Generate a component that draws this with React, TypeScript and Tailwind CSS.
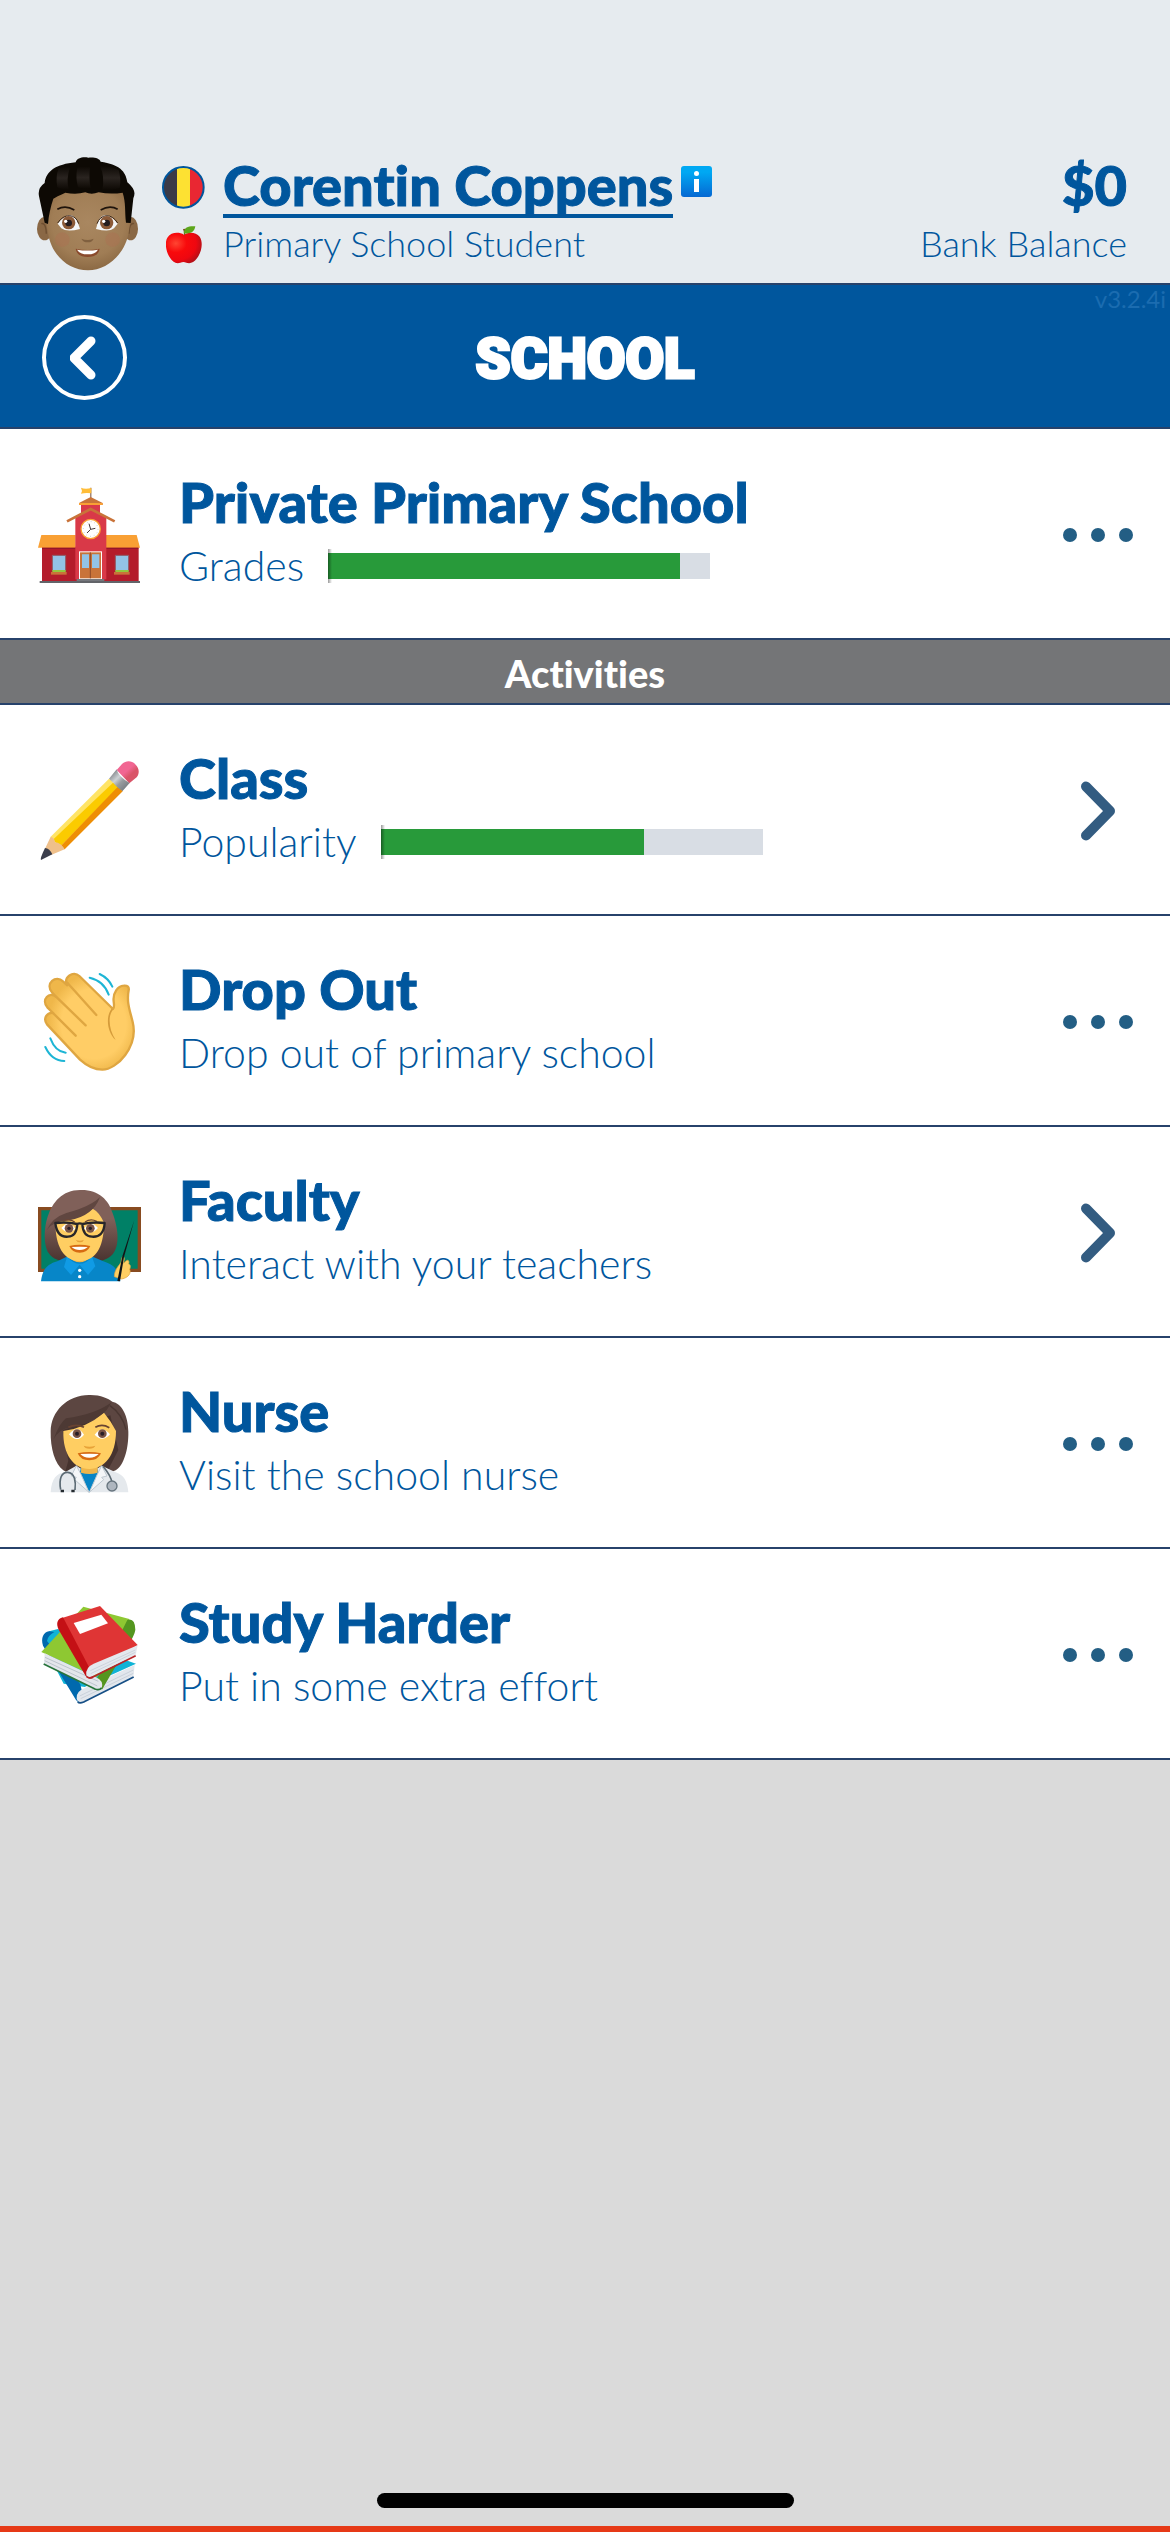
import React from "react";

interface Activity {
  title: string;
  detail: string;
  icon: React.ReactNode;
  action: "menu" | "open";
  progress?: number;
}

const AvatarIcon = () => (
  <svg viewBox="111 50 303 342" className="h-[114px] w-[101px]" aria-hidden="true">
    <defs>
      <radialGradient id="avatarSkin" cx="50%" cy="40%" r="65%">
        <stop offset="0" stopColor="#a98760" />
        <stop offset="0.65" stopColor="#a07d55" />
        <stop offset="1" stopColor="#86643f" />
      </radialGradient>
      <linearGradient id="avatarHair" x1="0" y1="0" x2="0" y2="1">
        <stop offset="0" stopColor="#0d0904" />
        <stop offset="0.5" stopColor="#2a2420" />
        <stop offset="1" stopColor="#0d0904" />
      </linearGradient>
    </defs>
    <ellipse cx="134" cy="265" rx="23" ry="35" fill="#8a6845" />
    <ellipse cx="392" cy="265" rx="22" ry="35" fill="#8a6845" />
    <path d="M124 250q14-4 15 30M402 250q-14-4-15 30" fill="none" stroke="#6e4f31" strokeWidth="4" />
    <path d="M140 150h248q10 60-1 120c-8 68-64 120-123 120s-110-46-120-112c-10-50-10-90-4-128z" fill="url(#avatarSkin)" />
    <circle cx="187" cy="298" r="22" fill="#b06c50" opacity="0.35" />
    <circle cx="338" cy="298" r="22" fill="#b06c50" opacity="0.35" />
    <path d="M117 168q-5-25 17-40c4-36 34-56 93-62 4-14 22-17 38-14 18-2 34 2 37 12 55 8 76 28 80 62 20 18 26 30 18 48l-8 74-14-1c-4-36 0-58-10-90q-36 6-72-1-22 8-40 0-28 8-60 1-28 12-36 18c-8 24-14 50-16 76l-10-4z" fill="#0d0904" />
    <path d="M176 84q20-8 34-3-12 36-4 65-20 4-34-5-6-32 4-57z" fill="url(#avatarHair)" />
    <path d="M232 82q16-6 38-2-4 36 2 64-24 4-38-3-8-30-2-59z" fill="url(#avatarHair)" />
    <path d="M300 76q32 0 56 14 8 25 3 53-24 8-52 5 8-38-7-72z" fill="url(#avatarHair)" />
    <path d="M172 207q24-14 51 2M302 209q28-16 51-2" fill="none" stroke="#1f140c" strokeWidth="5" />
    <path d="M173 250q20-26 38-26t29 42q-40 10-56-2z" fill="#f4f6f8" />
    <path d="M353 250q-20-26-38-26t-27 42q40 10 54-2z" fill="#f4f6f8" />
    <path d="M173 248q14-22 36-22 20 2 27 24M353 248q-14-22-34-22-20 2-28 24" fill="none" stroke="#3b2616" strokeWidth="3" />
    <circle cx="206" cy="247" r="20" fill="#8b5a38" />
    <circle cx="320" cy="247" r="20" fill="#8b5a38" />
    <circle cx="206" cy="248" r="10" fill="#241d20" />
    <circle cx="320" cy="248" r="10" fill="#241d20" />
    <circle cx="197" cy="243" r="5" fill="#fff" />
    <circle cx="311" cy="243" r="5" fill="#fff" />
    <path d="M244 295q18 8 37 0-4 11-18 11t-19-11z" fill="#80603f" />
    <path d="M227 325q36 8 72 0-4 25-36 25t-36-25z" fill="#8a4a2c" />
    <path d="M231 328q32 5 63 0-8 14-31 14t-32-14z" fill="#fff" />
  </svg>
);

const FlagIcon = () => (
  <svg viewBox="0 0 129 129" className="size-[43px] shrink-0" role="img" aria-label="Belgium">
    <clipPath id="flagCircle">
      <circle cx="64" cy="64" r="62" />
    </clipPath>
    <g clipPath="url(#flagCircle)">
      <path d="M0 0h45v129H0z" fill="#3b3a47" />
      <path d="M45 0h39v129H45z" fill="#fde132" />
      <path d="M84 0h45v129H84z" fill="#e92732" />
    </g>
    <circle cx="64" cy="64" r="61" fill="none" stroke="#00569d" strokeWidth="6" />
  </svg>
);

const AppleIcon = () => (
  <svg viewBox="498 254 108 114" className="h-[38px] w-[36px]" aria-hidden="true">
    <defs>
      <radialGradient id="appleSkin" cx="28%" cy="35%" r="75%">
        <stop offset="0" stopColor="#ff4532" />
        <stop offset="0.4" stopColor="#f80a0c" />
        <stop offset="0.75" stopColor="#ee0710" />
        <stop offset="1" stopColor="#b51018" />
      </radialGradient>
    </defs>
    <path d="M552 280c14-9 36-8 47 6 12 17 5 48-8 65-10 13-21 17-32 13-7-3-12-2-18 0-13 5-24-3-33-18-10-17-15-44-5-58 10-16 34-17 49-8z" fill="url(#appleSkin)" />
    <path d="M552 282q1-10-3-19l8-1q0 10-3 20z" fill="#7b4a1d" />
    <path d="M551 276c2-20 16-22 35-21-3 17-15 24-35 21z" fill="#5da61b" />
  </svg>
);

const SchoolIcon = () => (
  <svg viewBox="114 132 306 306" className="size-[102px] shrink-0" aria-hidden="true">
    <path d="M126 320h290v106H126z" fill="#b41c2b" />
    <path d="M124 285h103v38H114zM317 285h93l10 38H317z" fill="#f9a034" />
    <path d="M126 323h100v4H126zM318 323h97v4h-97z" fill="#94162a" />
    <path d="M119 423h302v6H119z" fill="#626469" />
    <path d="M271 143h3v35h-3z" fill="#764b36" />
    <path d="M243 143q12 6 31 1v16q-16-3-31 1l3-8z" fill="#ffbd38" />
    <path d="M243 195h57v25h-57z" fill="#d9394a" />
    <path d="M272 171l36 18v6h-71v-6z" fill="#c97339" />
    <path d="M237 189h71v6h-71z" fill="#f9a034" />
    <path d="M226 232l46-24 47 24v186h-93z" fill="#d93948" />
    <path d="M201 244l71-37 72 37" fill="none" stroke="#c97339" strokeWidth="8" />
    <circle cx="272" cy="267" r="29" fill="#fff" stroke="#f9a034" strokeWidth="4" />
    <circle cx="272" cy="267" r="22" fill="none" stroke="#9aa5ae" strokeWidth="3" strokeDasharray="1.5 10" />
    <path d="M267 251l5 17 14-3M272 268l-11 11" fill="none" stroke="#45393b" strokeWidth="3" />
    <path d="M237 334h69v84h-69z" fill="#fff" />
    <path d="M240 337h63v78h-63z" fill="#c97339" />
    <path d="M230 417h83v6h-83z" fill="#75777c" />
    <path d="M246 343h21v41h-21zM276 343h22v41h-22z" fill="#93c3e6" />
    <path d="M271 337v78" stroke="#8d4a29" strokeWidth="3" />
    {[177, 366].map((x) => (
      <g key={x}>
        <path d={`M${x - 20} 346h40v46h-40z`} fill="#93c3e6" stroke="#8e5b66" strokeWidth="3" />
        <path d={`M${x - 20} 390h40v8h-40z`} fill="#93c83e" />
        <path d={`M${x - 24} 396h47v8h-47z`} fill="#c97339" />
      </g>
    ))}
  </svg>
);

const PencilIcon = () => (
  <svg viewBox="114 120 306 306" className="size-[102px] shrink-0" aria-hidden="true">
    <defs>
      <linearGradient id="ferrule" x1="330" y1="165" x2="375" y2="210" gradientUnits="userSpaceOnUse">
        <stop offset="0" stopColor="#85898d" />
        <stop offset="0.35" stopColor="#cdd2d5" />
        <stop offset="0.6" stopColor="#989da1" />
        <stop offset="1" stopColor="#777c81" />
      </linearGradient>
      <linearGradient id="eraser" x1="360" y1="130" x2="405" y2="180" gradientUnits="userSpaceOnUse">
        <stop offset="0.45" stopColor="#f16692" />
        <stop offset="0.7" stopColor="#d95468" />
      </linearGradient>
    </defs>
    <path d="M350 150l16-18c14-13 32-9 41 2 10 10 13 24 3 38l-22 18z" fill="url(#eraser)" />
    <path d="M327 176l23-28q5 22 39 41l-22 25q-32-10-40-38z" fill="url(#ferrule)" />
    <path d="M152 350L327 176l13 13L160 365z" fill="#ffe466" />
    <path d="M158 360L339 188l15 16L180 380z" fill="#fbcb00" />
    <path d="M180 380L352 202l16 12-174 174z" fill="#ee8e05" />
    <path d="M152 350c10 4 13 10 13 17 11 0 23 9 29 21l-41 17-18-19z" fill="#efc08b" />
    <path d="M135 384q14 1 22 19l-34 17q-4-3 12-36z" fill="#3a3d4b" />
  </svg>
);

const WaveIcon = () => (
  <svg viewBox="114 123 306 306" className="size-[102px] shrink-0" aria-hidden="true">
    <defs>
      <radialGradient id="palm" cx="55%" cy="52%" r="52%">
        <stop offset="0.7" stopColor="#ffcd66" />
        <stop offset="1" stopColor="#efb74a" />
      </radialGradient>
    </defs>
    <path
      d="M240 389L141 283c-13-18 0-36 18-34l-17-17c-20-24 7-48 26-32l-12-13c-22-27 12-54 33-33l13 12c-13-26 18-44 36-28l101 99c5-5 3-13 2-23-3-26 13-46 30-47 12-1 17 4 15 14-7 36 4 61 12 95 18 73-47 143-91 143-24 0-43-8-67-30z"
      fill="url(#palm)" stroke="#dfa641" strokeWidth="7" strokeLinejoin="round"
    />
    <path d="M202 158l87 97M168 200l89 86M159 249l68 68" fill="none" stroke="#dfa641" strokeWidth="7" strokeLinecap="round" />
    <path d="M339 239c-16 18-13 59 8 91-27-25-30-73-12-94z" fill="#d59b3a" />
    <path d="M269 143q43 10 57 51M299 132q27 13 38 38M151 325q15 40 46 43M136 351q19 41 57 42" fill="none" stroke="#1db5d5" strokeWidth="6" strokeLinecap="round" />
  </svg>
);

const TeacherIcon = () => (
  <svg viewBox="114 96 306 306" className="size-[102px] shrink-0 overflow-visible" aria-hidden="true">
    <defs>
      <linearGradient id="teacherHair" x1="0" y1="0" x2="0" y2="1">
        <stop offset="0.4" stopColor="#806059" />
        <stop offset="1" stopColor="#49332f" />
      </linearGradient>
    </defs>
    <path d="M114 171h309v195H114z" fill="#884b20" />
    <path d="M124 181h289v175H124z" fill="#008066" />
    <path d="M240 120c55-2 86 29 98 70 16 43 23 95 0 123-28 30-72 24-98 15-29 12-75 10-94-19-26-40-12-189 94-189z" fill="url(#teacherHair)" />
    <path d="M210 300h60v40h-60z" fill="#eeb54b" />
    <path d="M123 394c4-38 21-52 49-60l31-15q36 36 72 0l35 15c33 10 47 27 51 60z" fill="#0786c8" />
    <path d="M201 320l-9 31 21 24 26-31 25 31 22-26-10-29q-36 43-75 0z" fill="#109be5" />
    <path d="M167 208q60 4 111-32 20 10 34 42c0 60-17 115-74 115s-75-65-71-125z" fill="#ffce62" />
    <path d="M140 241q16-27 67-30 73-13 93-70-25 27-101 48-43 14-59 52z" fill="#604640" />
    <path d="M190 213q18-8 34 3M255 216q17-12 35-2" fill="none" stroke="#6d4634" strokeWidth="4" />
    <path d="M184 234q22-27 42 2-20 23-42-2zM252 236q20-29 42-2-20 24-42 2z" fill="#fff" />
    <circle cx="207" cy="235" r="13" fill="#795446" />
    <circle cx="271" cy="235" r="13" fill="#795446" />
    <circle cx="207" cy="235" r="5" fill="#281e27" />
    <circle cx="271" cy="235" r="5" fill="#281e27" />
    <path d="M166 219q33-4 66 3-2 37-28 38-33 3-38-41zM314 219q-33-4-67 3 2 37 29 38 35 3 38-41zM230 222q9-4 18 0" fill="none" stroke="#29272a" strokeWidth="7" strokeLinejoin="round" />
    <path d="M227 269q12 6 25 0-3 8-12 8t-13-8z" fill="#e7a238" />
    <path d="M208 288q31-8 63 0-9 20-32 20t-31-20z" fill="#d76b12" />
    <path d="M215 291q24-2 48 0-9 9-24 9t-24-9z" fill="#fff" />
    <circle cx="239" cy="361" r="5" fill="#fff" />
    <circle cx="239" cy="380" r="5" fill="#fff" />
    <path d="M343 380c0-21 12-30 20-43 2-19 8-23 10-11l-2 14c14-18 18-6 15 2 8 3 5 12 3 16 5 10-2 25-24 29z" fill="#ffce62" stroke="#dfa33d" strokeWidth="2" />
    <path d="M403 210l-31 111-12 73-8-1 15-74z" fill="#121517" />
  </svg>
);

const NurseIcon = () => (
  <svg viewBox="114 99 306 306" className="size-[102px] shrink-0" aria-hidden="true">
    <path d="M267 105c34-1 57 10 70 20 27 4 48 42 48 90 1 51-13 101-38 116-34 18-123 20-157 0-25-18-39-66-38-117 1-60 49-108 115-109z" fill="#5c4641" />
    <path d="M188 210l17 92-9 32 128-4 31-60-24-104z" fill="#46332f" />
    <path d="M152 397c3-41 17-57 44-61l33-19q38 28 76 0l42 20c25 8 35 26 38 60z" fill="#e5e9ed" />
    <path d="M244 315l-5 27 29 55 29-55-9-29z" fill="#0784c5" />
    <path d="M244 310h49v28q-25 8-50 0z" fill="#eeb54b" />
    <path d="M190 213q70-10 122-55 23 28 36 55c0 73-34 113-80 114-47 0-80-44-78-114z" fill="#ffce62" />
    <path d="M161 237q17-30 45-34 75-13 114-53l15-23q-50 37-137 48-20 15-37 62z" fill="#4d3934" />
    <path d="M330 137q37 26 48 72" fill="none" stroke="#493631" strokeWidth="4" />
    <path d="M205 202q24-12 47 0M286 202q20-12 42 1" fill="none" stroke="#694331" strokeWidth="5" />
    <path d="M207 223q25-31 45 1-22 27-45-1zM284 224q22-31 46-1-23 26-46 1z" fill="#fff" />
    <circle cx="231" cy="221" r="13" fill="#795446" />
    <circle cx="307" cy="221" r="13" fill="#795446" />
    <circle cx="231" cy="221" r="6" fill="#281e27" />
    <circle cx="307" cy="221" r="6" fill="#281e27" />
    <path d="M251 257q17 6 35 0-4 9-18 9t-17-9z" fill="#e7a238" />
    <path d="M233 280q35-8 70 0-9 21-35 21t-35-21z" fill="#d76b12" />
    <path d="M241 282q27-2 55 0-10 11-28 11t-27-11z" fill="#fff" />
    <path d="M229 317l-15 31 15 4-5 7 43 38-24-54zM305 317l16 31-16 4 6 7-43 38 24-54z" fill="#f4f6f8" stroke="#bfc9d1" strokeWidth="3" />
    <path d="M182 389c-6-33 3-53 21-52 22 1 25 29 22 53M309 319q25 30 27 50" fill="none" stroke="#5b6a74" strokeWidth="5" />
    <circle cx="336" cy="378" r="15" fill="#aeb6bf" stroke="#66747e" strokeWidth="4" />
    <path d="M182 393h10M214 393h10" stroke="#242b30" strokeWidth="8" />
  </svg>
);

const BooksIcon = () => (
  <svg viewBox="114 102 306 306" className="size-[102px] shrink-0" aria-hidden="true">
    <path d="M147 184l27-7 59 42 175 62-154 70-63-10-58-112z" fill="#10b3d6" />
    <path d="M147 184c-17 3-25 20-18 43l99 163q9 14 25 7l-12-54-100-130q2-16 22-27z" fill="#0069ae" />
    <path d="M230 386q-3-21 23-31l151-70-4 37-151 75q-15 3-19-11z" fill="#e2e7ed" />
    <path d="M233 396q6 5 18 0l150-75" fill="none" stroke="#164f85" strokeWidth="5" />
    <path d="M239 378l161-78M242 386l158-76" stroke="#bdc6d0" strokeWidth="2" />
    <path d="M124 246L250 110l138 37q-16 45-98 175z" fill="#8ec832" />
    <path d="M382 150q23-7 24 29c-2 24-42 78-99 179h-25q5-35 21-50z" fill="#54961f" />
    <path d="M134 250l154 72q24 10 17 33-5 8-19 3L132 283z" fill="#e3e6eb" />
    <path d="M135 262l160 72M134 272l158 76" fill="none" stroke="#bcc4cd" strokeWidth="3" />
    <path d="M131 282l154 75q13 5 20-4" fill="none" stroke="#27743b" strokeWidth="5" />
    <path d="M184 145l116-37 113 117-145 89q-60-70-84-169z" fill="#df3535" />
    <path d="M189 142c-19 5-21 20-13 37l81 139q7 12 23 6l-8-23z" fill="#c41015" />
    <path d="M259 315q-3-23 22-34l132-55-6 30-140 67q-6 0-8-8z" fill="#e4e8ee" />
    <path d="M260 320q7 6 17 2l130-65" fill="none" stroke="#b92427" strokeWidth="5" />
    <path d="M271 302l135-62M272 311l134-64" stroke="#c1c9d2" strokeWidth="2" />
    <path d="M221 159l83-25 20 26-84 32z" fill="#fff" />
  </svg>
);

const Dots = () => (
  <svg viewBox="0 0 70 14" className="h-[14px] w-[70px]" fill="#235e84" aria-hidden="true">
    <circle cx="7" cy="7" r="7" />
    <circle cx="35" cy="7" r="7" />
    <circle cx="63" cy="7" r="7" />
  </svg>
);

const Chevron = () => (
  <svg viewBox="0 0 34 60" className="h-[60px] w-[34px]" fill="none" stroke="#335c81" strokeWidth="10" strokeLinecap="round" strokeLinejoin="round" aria-hidden="true">
    <path d="M5 5.500l24 24.500L5 54.500" />
  </svg>
);

const ProgressBar = ({ label, value }: { label: string; value: number }) => (
  <div role="progressbar" aria-label={label} aria-valuenow={value} aria-valuemin={0} aria-valuemax={100} className="relative h-[26px] w-[382px] bg-[#d8dde4]">
    <div className="h-full bg-[#289a3a]" style={{ width: `${value}%` }} />
    <div className="absolute -top-1 -bottom-1 left-0 w-1 bg-linear-to-r from-black/40 to-transparent" />
  </div>
);

const ActivityRow = ({ title, detail, icon, action, progress }: Activity) => (
  <button type="button" className="flex w-full items-center border-b-2 border-[#27426b] bg-white pt-[55px] pr-[37px] pb-[52px] pl-[38px] text-left">
    {icon}
    <div className="-my-4 ml-[39px] flex-1 pb-2">
      <div className="mb-[6px] text-[56px] leading-[64px] font-black [-webkit-text-stroke:1px]">{title}</div>
      <div className="flex items-center gap-6 text-[41px] leading-[52px] font-light">
        <span>{detail}</span>
        {progress !== undefined && <ProgressBar label={detail} value={progress} />}
      </div>
    </div>
    <div className="flex w-[70px] justify-center">{action === "open" ? <Chevron /> : <Dots />}</div>
  </button>
);

const activities: Activity[] = [
  { title: "Class", detail: "Popularity", icon: <PencilIcon />, action: "open", progress: 69 },
  { title: "Drop Out", detail: "Drop out of primary school", icon: <WaveIcon />, action: "menu" },
  { title: "Faculty", detail: "Interact with your teachers", icon: <TeacherIcon />, action: "open" },
  { title: "Nurse", detail: "Visit the school nurse", icon: <NurseIcon />, action: "menu" },
  { title: "Study Harder", detail: "Put in some extra effort", icon: <BooksIcon />, action: "menu" },
];

const App: React.FC = () => {
  return (
    <div className="flex min-h-screen flex-col bg-[#dadada] font-['Lato',sans-serif] text-[#00569d] [font-variant-ligatures:none]">
      <header className="flex items-end border-b-2 border-[#27426b] bg-[#e6ebef] pt-[157px] pr-[43px] pb-3 pl-[37px]">
        <AvatarIcon />
        <div className="ml-6 flex-1">
          <div className="flex items-start">
            <div className="mt-1">
              <FlagIcon />
            </div>
            <a href="#profile" className="ml-[18px] border-b-4 border-[#00569d] pb-[6px] text-[56px] leading-[46px] font-black [-webkit-text-stroke:1px]">
              Corentin Coppens
            </a>
            <button type="button" aria-label="Info" className="mt-1 ml-2">
              <svg viewBox="0 0 31 31" className="size-[31px]" aria-hidden="true">
                <defs>
                  <linearGradient id="infoBg" x1="0" y1="0" x2="0" y2="1">
                    <stop offset="0.2" stopColor="#00a8f3" />
                    <stop offset="1" stopColor="#0668d2" />
                  </linearGradient>
                </defs>
                <rect width="31" height="31" rx="3" fill="url(#infoBg)" />
                <circle cx="15.500" cy="7.500" r="2.500" fill="#fff" />
                <path d="M13 13h5v13h-5z" fill="#fff" />
              </svg>
            </button>
          </div>
          <div className="flex h-[53px] items-center">
            <div className="flex w-[43px] justify-center">
              <AppleIcon />
            </div>
            <span className="ml-[18px] pb-[3px] text-[36px] leading-[50px] font-light">Primary School Student</span>
          </div>
        </div>
        <div className="text-right">
          <div className="mb-[10px] text-[56px] leading-[46px] font-black [-webkit-text-stroke:1px]">$0</div>
          <div className="pb-[3px] text-[36px] leading-[50px] font-light">Bank Balance</div>
        </div>
      </header>

      <nav className="relative flex items-center justify-between border-b-2 border-[#27426b] bg-[#00569d] px-[42px] pt-[30px] pb-[27px] text-white">
        <button type="button" aria-label="Back" className="flex size-[85px] items-center justify-center rounded-full border-4 border-white">
          <svg viewBox="0 0 30 44" className="h-[44px] w-[30px]" fill="none" stroke="currentColor" strokeWidth="9" strokeLinecap="round" strokeLinejoin="round" aria-hidden="true">
            <path d="M21 5L4 22l17 17" />
          </svg>
        </button>
        <h1 className="pt-[2px] font-['Roboto',sans-serif] text-[56px] leading-[62px] font-black [-webkit-text-stroke:3px]">SCHOOL</h1>
        <div className="w-[85px]" />
        <span className="absolute top-0 right-1 text-[24px] leading-[28px] text-[#1b6cb0]">v3.2.4i</span>
      </nav>

      <main>
        <ActivityRow title="Private Primary School" detail="Grades" icon={<SchoolIcon />} action="menu" progress={92} />
        <h2 className="border-b-2 border-[#27426b] bg-[#747577] pt-1 text-center text-[38px] leading-[59px] font-black text-white">Activities</h2>
        {activities.map((activity) => (
          <ActivityRow key={activity.title} {...activity} />
        ))}
      </main>

      <footer className="mt-auto flex justify-center border-b-[6px] border-[#e63916] pb-[18px]">
        <div className="h-[15px] w-[417px] rounded-full bg-black" />
      </footer>
    </div>
  );
};

export default App;
